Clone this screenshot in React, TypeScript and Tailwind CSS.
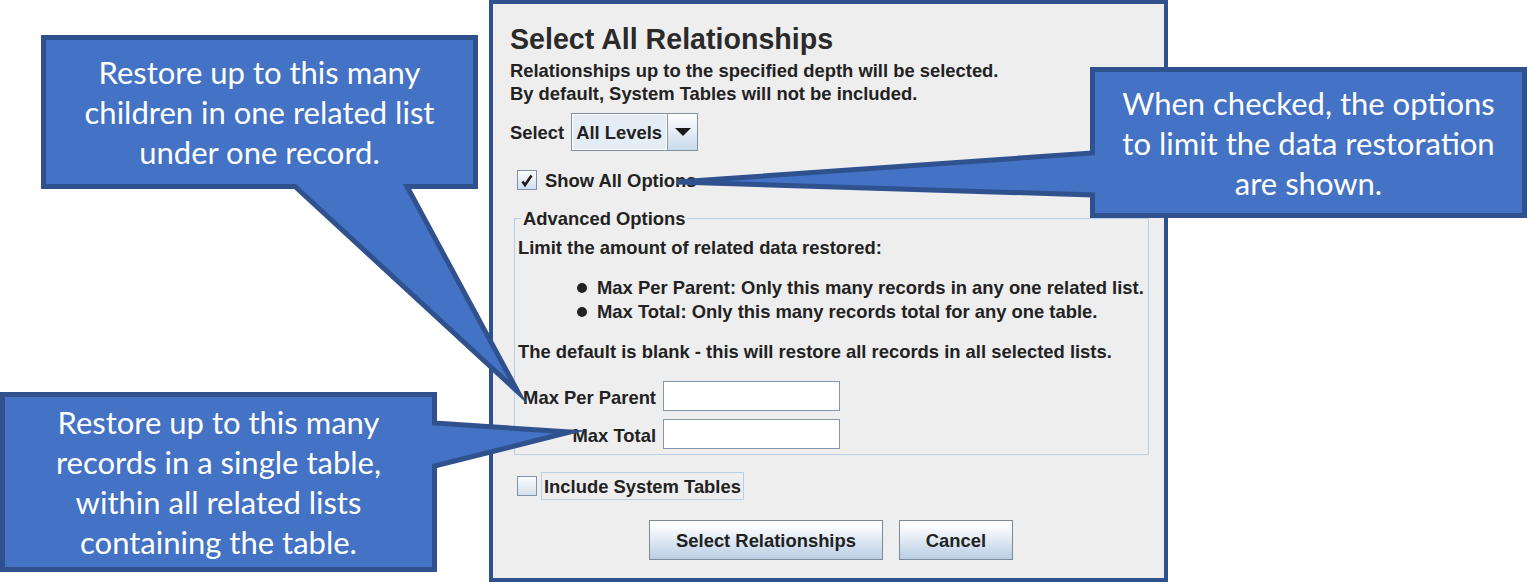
import React from "react";

const body = "font-['Liberation_Sans',Arial,sans-serif] font-bold text-[18.4px] leading-[23px] text-[#222]";

function CheckBox({ checked }: { checked?: boolean }) {
  return (
    <div className="flex h-[20px] w-[20px] items-center justify-center border border-[#7f93a8] bg-linear-to-b from-[#fbfcfd] to-[#d3e0ed]">
      {checked && (
        <svg width="16" height="16" viewBox="0 0 16 16">
          <path d="M3.5 9.5 L6 13 L12.5 3.5" fill="none" stroke="#1c1c1c" strokeWidth="2.6" strokeLinejoin="miter" />
        </svg>
      )}
    </div>
  );
}

function Callout({ className, lines }: { className: string; lines: string[] }) {
  return (
    <div
      className={`absolute flex flex-col items-center justify-center font-['Lato','Open_Sans',sans-serif] text-[31px] leading-[40px] text-white ${className}`}
    >
      {lines.map((l) => (
        <span key={l} className="block whitespace-nowrap">
          {l}
        </span>
      ))}
    </div>
  );
}

export default function App() {
  return (
    <div className="relative h-[584px] w-[1527px] overflow-hidden bg-white">
      {/* Dialog */}
      <div className={`ml-[489px] h-[582px] w-[679px] border-4 border-[#2f528f] bg-[#eeeeee] pl-[17px] pt-[19px] ${body}`}>
        <div className="h-[32px] text-[28.6px] leading-[32px] text-[#2a2a2a]">Select All Relationships</div>
        <div className="mt-[4px]">
          Relationships up to the specified depth will be selected.
          <br />
          By default, System Tables will not be included.
        </div>

        <div className="mt-[8px] flex h-[38px] items-center">
          <span>Select</span>
          <div className="ml-[7px] flex h-[38px] w-[127px] border border-[#7f93a8]">
            <div className="flex flex-1 items-center border border-white bg-[#e4ecf5] pl-[3px]">All Levels</div>
            <div className="flex w-[30px] items-center justify-center border-l border-[#8a9bae] bg-linear-to-b from-white to-[#c9d9e9]">
              <svg width="16" height="8" viewBox="0 0 16 8">
                <polygon points="0,0 16,0 8,8" fill="#1a1a1a" />
              </svg>
            </div>
          </div>
        </div>

        <div className="mt-[19px] flex h-[20px] items-center pl-[7px]">
          <CheckBox checked />
          <span className="ml-[8px]">Show All Options</span>
        </div>

        <fieldset className="ml-[4px] mt-[17px] w-[635px] border border-[#b8cfe5] pb-[5px] pl-[3px]">
          <legend className="ml-[3px] px-[2px]">Advanced Options</legend>
          <div className="mt-[6px]">Limit the amount of related data restored:</div>
          <ul className="mt-[17px] pl-[59px] leading-[24px]">
            <li className="flex items-center">
              <span className="mr-[10px] h-[10px] w-[10px] rounded-full bg-[#222]" />
              Max Per Parent: Only this many records in any one related list.
            </li>
            <li className="flex items-center">
              <span className="mr-[10px] h-[10px] w-[10px] rounded-full bg-[#222]" />
              Max Total: Only this many records total for any one table.
            </li>
          </ul>
          <div className="mt-[16px]">The default is blank - this will restore all records in all selected lists.</div>
          <div className="mt-[18px] grid grid-cols-[138px_177px] gap-x-[7px] gap-y-[8px]">
            <div className="flex h-[30px] items-center justify-end pt-[2px]">Max Per Parent</div>
            <div className="h-[30px] border border-[#8696a8] bg-white" />
            <div className="flex h-[30px] items-center justify-end pt-[2px]">Max Total</div>
            <div className="h-[30px] border border-[#8696a8] bg-white" />
          </div>
        </fieldset>

        <div className="mt-[17px] flex h-[28px] items-center pl-[7px]">
          <CheckBox />
          <span className="ml-[4px] flex h-[28px] items-center border border-[#b8cfe5] px-[2px]">Include System Tables</span>
        </div>

        <div className="mt-[20px] flex gap-[16px] pl-[139px]">
          <button className="h-[40px] w-[234px] border border-[#7a8a99] bg-linear-to-b from-white from-10% to-[#b9cee4]">
            Select Relationships
          </button>
          <button className="h-[40px] w-[114px] border border-[#7a8a99] bg-linear-to-b from-white from-10% to-[#b9cee4]">
            Cancel
          </button>
        </div>
      </div>

      {/* Callout shapes */}
      <svg className="pointer-events-none absolute left-0 top-0" width="1527" height="584" viewBox="0 0 1527 584">
        <g fill="#4472c4" stroke="#2f528f" strokeWidth="5" strokeLinejoin="miter" strokeMiterlimit="10">
          <path d="M43.5 37.5 H475.5 V186.5 H407 L518 392 L295 186.5 H43.5 Z" />
          <path d="M1092.5 69.5 H1524.5 V215.5 H1092.5 V195 L677 182 L1092.5 153 Z" />
          <path d="M2.5 394.5 H434.5 V423 L570 432 L434.5 466 V569.5 H2.5 Z" />
        </g>
      </svg>

      <Callout
        className="left-[41px] top-[35px] h-[154px] w-[437px]"
        lines={["Restore up to this many", "children in one related list", "under one record."]}
      />
      <Callout
        className="left-[1090px] top-[67px] h-[151px] w-[437px]"
        lines={["When checked, the options", "to limit the data restoration", "are shown."]}
      />
      <Callout
        className="left-0 top-[392px] h-[180px] w-[437px]"
        lines={["Restore up to this many", "records in a single table,", "within all related lists", "containing the table."]}
      />
    </div>
  );
}
